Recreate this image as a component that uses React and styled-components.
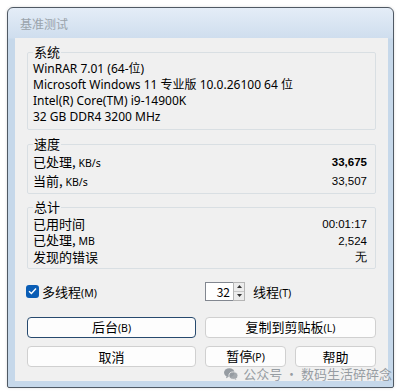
import React from 'react'
import styled, { createGlobalStyle } from 'styled-components'

const Global = createGlobalStyle`
    html, body { margin: 0; padding: 0; background: #fff; }
    body { font-family: "Noto Sans", "Noto Sans CJK SC", sans-serif; }
`
const Page = styled.div`
    position: relative;
    width: 406px;
    height: 391px;
    padding: 7px 0 0 7px;
    box-sizing: border-box;
`
const Window = styled.div`
    width: 387px;
    height: 381px;
    box-sizing: border-box;
    border: 1px solid #4f5964;
    border-radius: 6px 6px 2px 2px;
    background: linear-gradient(to bottom, #e4edf7 0px, #cfdeee 30px, #c6d8ea 31px, #c6d8ea 100%);
    box-shadow: 0 0 3px rgba(0, 0, 0, 0.15);
    display: flex;
    flex-direction: column;
    padding: 0 5px 6px 7px;
`
const TitleBar = styled.div`
    height: 30px;
    display: flex;
    align-items: center;
    padding-left: 5px;
    font-family: "Noto Sans CJK SC", sans-serif;
    font-size: 12px;
    color: #9aa3ab;
`
const Client = styled.div`
    flex: 1;
    background: #f0f0f0;
    padding: 6px 12px 0 12px;
    display: flex;
    flex-direction: column;
    color: #000;
    font-size: 12px;
`
const Group = styled.fieldset`
    margin: ${p => p.$top}px 0 0 0;
    padding: 1px 5px ${p => p.$bottom}px 5px;
    border: 1px solid #d9dfe3;
    border-radius: 2px;
    line-height: ${p => p.$lh}px;
`
const Legend = styled.legend`
    padding: 0 1px;
    font-family: "Noto Sans CJK SC", sans-serif;
    font-size: 13px;
    line-height: 16px;
`
const Line = styled.div`
    display: flex;
    justify-content: space-between;
    align-items: center;
    white-space: nowrap;
    font-size: 12px;
`
const Label = styled.span`
    font-family: "Noto Sans CJK SC", sans-serif;
    font-size: 13px;
    small { font-family: "Noto Sans", sans-serif; font-size: 10.5px; }
`
const Info = styled.span`
    font-family: "Noto Sans", "Noto Sans CJK SC", sans-serif;
    font-size: 12px;
`
const Value = styled.span`
    font-family: "Liberation Sans", sans-serif;
    font-size: 11.5px;
    font-weight: ${p => (p.$bold ? 700 : 400)};
    padding-right: 3px;
`
const OptionRow = styled.div`
    display: flex;
    align-items: center;
    height: 22px;
    margin-top: 11px;
`
const CheckLabel = styled.label`
    display: flex;
    align-items: center;
    gap: 3px;
    width: 178px;
    font-family: "Noto Sans CJK SC", sans-serif;
    font-size: 13px;
    small { font-family: "Noto Sans", sans-serif; font-size: 10.5px; }
`
const Box = styled.span`
    width: 13px;
    height: 13px;
    border-radius: 3px;
    background: #0a5db5;
    display: flex;
    align-items: center;
    justify-content: center;
    margin-left: -1px;
`
const Spin = styled.div`
    display: flex;
    align-items: center;
    gap: 8px;
    font-family: "Noto Sans CJK SC", sans-serif;
    font-size: 13px;
    small { font-family: "Noto Sans", sans-serif; font-size: 10.5px; }
`
const SpinBox = styled.div`
    display: flex;
    height: 19px;
`
const SpinInput = styled.div`
    width: 24px;
    height: 17px;
    border: 1px solid #828790;
    border-right: none;
    background: #fff;
    text-align: right;
    padding-right: 3px;
    font-size: 12px;
    line-height: 17px;
`
const SpinButtons = styled.div`
    display: flex;
    flex-direction: column;
    width: 10px;
    border: 1px solid #b5b5b5;
    background: #fff;
`
const Arrow = styled.div`
    flex: 1;
    display: flex;
    align-items: center;
    justify-content: center;
    background: #ececec;
    border-bottom: ${p => (p.$up ? '1px solid #c8c8c8' : 'none')};
`
const Buttons = styled.div`
    display: grid;
    grid-template-columns: 169px 81px 81px;
    column-gap: 9px;
    row-gap: 8px;
    margin-top: 15px;
`
const Button = styled.button`
    grid-column: span ${p => p.$span || 1};
    height: 21px;
    margin: 0;
    padding: 0;
    background: #fdfdfd;
    border: 1px solid ${p => (p.$focus ? '#274a6e' : '#d0d0d0')};
    border-radius: 4px;
    font-family: "Noto Sans CJK SC", sans-serif;
    font-size: 13px;
    line-height: 17px;
    color: #000;
    small { font-family: "Noto Sans", sans-serif; font-size: 10.5px; }
`
const Watermark = styled.div`
    position: absolute;
    right: 14px;
    bottom: 8px;
    display: flex;
    align-items: center;
    gap: 5px;
    font-family: "Noto Sans CJK SC", sans-serif;
    font-size: 13px;
    color: rgba(120, 128, 136, 0.75);
`

const Wechat = () => (
    <svg width="14" height="12" viewBox="0 0 14 12">
        <ellipse cx="5.3" cy="4.6" rx="5.3" ry="4.4" fill="rgba(120,128,136,0.75)" />
        <path d="M2.5 8.2 L2 10.3 L4.4 9" fill="rgba(120,128,136,0.75)" />
        <ellipse cx="9.4" cy="7.6" rx="4.5" ry="3.7" fill="rgba(150,156,162,0.85)" stroke="#f0f0f0" strokeWidth="0.8" />
        <path d="M11.8 10.6 L12.4 12 L10.4 11" fill="rgba(150,156,162,0.85)" />
    </svg>
)

const App = () => {
    return (
        <Page>
            <Global />
            <Window>
                <TitleBar>基准测试</TitleBar>
                <Client>
                    <Group $top={0} $bottom={4} $lh={16}>
                        <Legend>系统</Legend>
                        <Line><Info>WinRAR 7.01 (64-位)</Info></Line>
                        <Line><Info>Microsoft Windows 11 专业版 10.0.26100 64 位</Info></Line>
                        <Line><Info>Intel(R) Core(TM) i9-14900K</Info></Line>
                        <Line><Info>32 GB DDR4 3200 MHz</Info></Line>
                    </Group>
                    <Group $top={6} $bottom={2} $lh={17}>
                        <Legend>速度</Legend>
                        <Line><Label>已处理, <small>KB/s</small></Label><Value $bold>33,675</Value></Line>
                        <Line><Label>当前, <small>KB/s</small></Label><Value>33,507</Value></Line>
                    </Group>
                    <Group $top={5} $bottom={3} $lh={16}>
                        <Legend>总计</Legend>
                        <Line><Label>已用时间</Label><Value>00:01:17</Value></Line>
                        <Line><Label>已处理, <small>MB</small></Label><Value>2,524</Value></Line>
                        <Line><Label>发现的错误</Label><Value>无</Value></Line>
                    </Group>
                    <OptionRow>
                        <CheckLabel>
                            <Box>
                                <svg width="9" height="8" viewBox="0 0 9 8">
                                    <path d="M1 4.2 L3.4 6.5 L8 1.5" stroke="#fff" strokeWidth="1.4" fill="none" />
                                </svg>
                            </Box>
                            <span>多线程<small>(M)</small></span>
                        </CheckLabel>
                        <Spin>
                            <SpinBox>
                                <SpinInput>32</SpinInput>
                                <SpinButtons>
                                    <Arrow $up>
                                        <svg width="5" height="3" viewBox="0 0 5 3"><path d="M0 3 L2.5 0 L5 3Z" fill="#333" /></svg>
                                    </Arrow>
                                    <Arrow>
                                        <svg width="5" height="3" viewBox="0 0 5 3"><path d="M0 0 L2.5 3 L5 0Z" fill="#333" /></svg>
                                    </Arrow>
                                </SpinButtons>
                            </SpinBox>
                            <span>线程<small>(T)</small></span>
                        </Spin>
                    </OptionRow>
                    <Buttons>
                        <Button $focus>后台<small>(B)</small></Button>
                        <Button $span={2}>复制到剪贴板<small>(L)</small></Button>
                        <Button>取消</Button>
                        <Button>暂停<small>(P)</small></Button>
                        <Button>帮助</Button>
                    </Buttons>
                </Client>
            </Window>
            <Watermark>
                <Wechat />
                公众号 · 数码生活碎碎念
            </Watermark>
        </Page>
    )
}
export default App
